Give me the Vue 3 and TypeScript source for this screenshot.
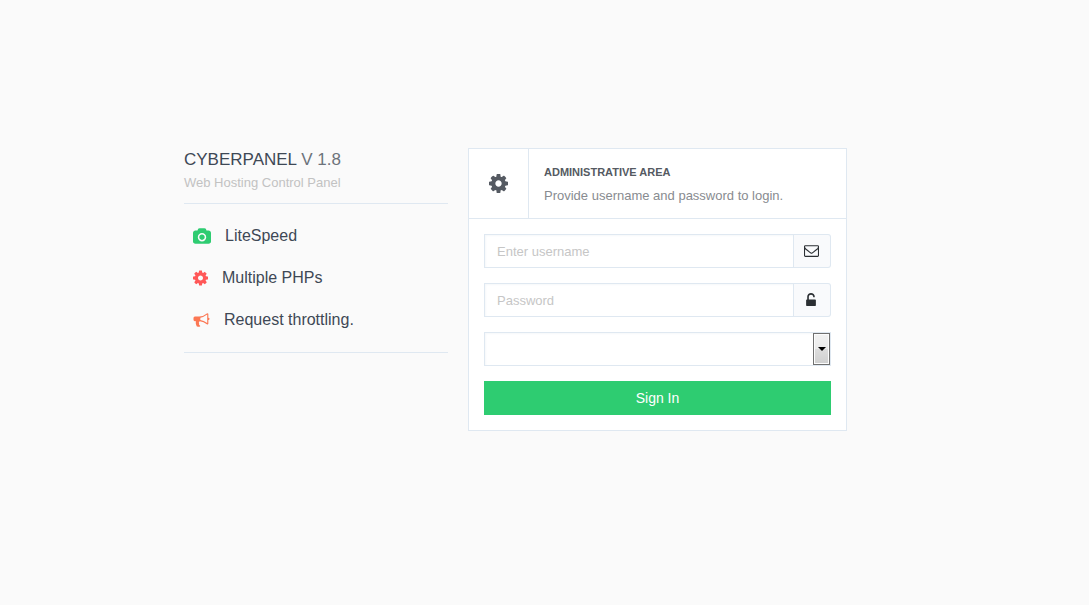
<script setup lang="ts">
import { ref } from 'vue'

interface Feature {
  label: string
  tone: string
  viewBox: string
  path: string
}

const cog =
  'M1152 896q0-106-75-181t-181-75-181 75-75 181 75 181 181 75 181-75 75-181zm512-109v222q0 12-8 23t-20 13l-185 28q-19 54-39 91 35 50 107 138 10 12 10 25t-9 23q-27 37-99 108t-94 71q-12 0-26-9l-138-108q-44 23-91 38-16 136-29 186-7 28-36 28h-222q-14 0-24.5-8.5t-11.5-21.5l-28-184q-49-16-90-37l-141 107q-10 9-25 9-14 0-25-11-126-114-165-168-7-10-7-23 0-12 8-23 15-21 51-66.5t54-70.5q-27-50-41-99l-183-27q-13-2-21-12.5t-8-23.5v-222q0-12 8-23t19-13l186-28q14-46 39-92-40-57-107-138-10-12-10-24 0-10 9-23 26-36 98.5-107.5t94.5-71.5q13 0 26 10l138 107q44-23 91-38 16-136 29-186 7-28 36-28h222q14 0 24.5 8.5t11.5 21.5l28 184q49 16 90 37l142-107q9-9 24-9 13 0 25 10 129 119 165 170 7 8 7 22 0 12-8 23-15 21-51 66.5t-54 70.5q26 50 41 98l183 28q13 2 21 12.5t8 23.5z'

const features: Feature[] = [
  {
    label: 'LiteSpeed',
    tone: 'camera',
    viewBox: '0 0 1920 1664',
    path: 'M960 672q119 0 203.5 84.5t84.5 203.5-84.5 203.5-203.5 84.5-203.5-84.5-84.5-203.5 84.5-203.5 203.5-84.5zm704-416q106 0 181 75t75 181v896q0 106-75 181t-181 75h-1408q-106 0-181-75t-75-181v-896q0-106 75-181t181-75h224l51-136q19-49 69.5-84.5t103.5-35.5h512q53 0 103.5 35.5t69.5 84.5l51 136h224zm-704 1152q185 0 316.5-131.5t131.5-316.5-131.5-316.5-316.5-131.5-316.5 131.5-131.5 316.5 131.5 316.5 316.5 131.5z'
  },
  { label: 'Multiple PHPs', tone: 'gear', viewBox: '128 128 1536 1536', path: cog },
  {
    label: 'Request throttling.',
    tone: 'horn',
    viewBox: '0 0 1792 1792',
    path: 'M1664 640q53 0 90.5 37.5t37.5 90.5-37.5 90.5-90.5 37.5v384q0 52-38 90t-90 38q-417-347-812-380-58 19-91 66t-31 100.5 40 92.5q-20 33-23 65.5t6 58 33.5 55 48 50 61.5 50.5q-29 58-111.5 83t-168.5 11.5-132-55.5q-7-23-29.5-87.5t-32-94.5-23-89-15-101 3.5-98.5 22-110.5h-122q-66 0-113-47t-47-113v-192q0-66 47-113t113-47h480q435 0 896-384 52 0 90 38t38 90v384zm-128 604v-954q-394 302-768 343v270q377 42 768 341z'
  }
]

const username = ref('')
const password = ref('')
const language = ref('')
</script>

<template>
  <main class="login">
    <section class="intro">
      <header class="brand">
        <h1>CYBERPANEL <span>V 1.8</span></h1>
        <p>Web Hosting Control Panel</p>
      </header>
      <ul class="features">
        <li v-for="f in features" :key="f.label">
          <svg :class="['mark', f.tone]" :viewBox="f.viewBox" aria-hidden="true"><path :d="f.path" /></svg>
          <span>{{ f.label }}</span>
        </li>
      </ul>
    </section>

    <form class="card" @submit.prevent>
      <header class="card-head">
        <div class="card-icon">
          <svg viewBox="128 128 1536 1536" aria-hidden="true"><path :d="cog" /></svg>
        </div>
        <div class="card-title">
          <h2>ADMINISTRATIVE AREA</h2>
          <p>Provide username and password to login.</p>
        </div>
      </header>
      <div class="fields">
        <div class="group">
          <input v-model="username" type="text" placeholder="Enter username" aria-label="Username" />
          <span class="addon">
            <svg class="envelope" viewBox="0 0 1792 1792" aria-hidden="true">
              <path d="M1664 1504v-768q-32 36-69 66-268 206-426 338-51 43-83 67t-86.5 48.5-102.5 24.5h-2q-48 0-102.5-24.5t-86.5-48.5-83-67q-158-132-426-338-37-30-69-66v768q0 13 9.5 22.5t22.5 9.5h1472q13 0 22.5-9.5t9.5-22.5zm0-1051v-24.5l-.5-13-3-12.5-5.5-9-9-7.5-14-2.5h-1472q-13 0-22.5 9.5t-9.5 22.5q0 168 147 284 193 152 401 317 6 5 35 29.5t46 37.5 44.5 31.5 50.5 27.5 43 9h2q20 0 43-9t50.5-27.5 44.5-31.5 46-37.5 35-29.5q208-165 401-317 54-43 100.5-115.5t46.5-131.5zm128-37v1088q0 66-47 113t-113 47h-1472q-66 0-113-47t-47-113v-1088q0-66 47-113t113-47h1472q66 0 113 47t47 113z" />
            </svg>
          </span>
        </div>
        <div class="group">
          <input v-model="password" type="password" placeholder="Password" aria-label="Password" />
          <span class="addon">
            <svg class="lock" viewBox="320 128 1152 1536" aria-hidden="true">
              <path d="M1376 896q40 0 68 28t28 68v576q0 40-28 68t-68 28h-960q-40 0-68-28t-28-68v-576q0-40 28-68t68-28h32v-320q0-185 131.5-316.5t316.5-131.5 316.5 131.5 131.5 316.5q0 26-19 45t-45 19h-64q-26 0-45-19t-19-45q0-106-75-181t-181-75-181 75-75 181v320h736z" />
            </svg>
          </span>
        </div>
        <div class="picker">
          <select v-model="language" aria-label="Language">
            <option value=""></option>
          </select>
          <span class="drop" aria-hidden="true"></span>
        </div>
        <button type="submit">Sign In</button>
      </div>
    </form>
  </main>
</template>

<style>
html {
  background: #fafafa;
}
</style>

<style scoped>
.login {
  display: grid;
  grid-template-columns: 264fr 379fr;
  gap: 20px;
  align-items: start;
  padding: 148px 242px 148px 184px;
  font-family: "Liberation Sans", Arial, sans-serif;
  color: #3e4855;
}
h1,
h2,
p,
ul {
  margin: 0;
  padding: 0;
  font-weight: 400;
}
svg {
  display: block;
  flex: none;
  fill: currentColor;
}
.brand {
  padding-bottom: 9px;
  border-bottom: 1px solid #dfe8f1;
}
.brand h1 {
  font-size: 17px;
  line-height: 24px;
}
.brand h1 span {
  color: #6d737b;
}
.brand p {
  font-size: 13px;
  line-height: 22px;
  color: #c2c2c2;
}
.features {
  display: flex;
  flex-direction: column;
  gap: 22px;
  padding: 22px 9px;
  list-style: none;
  border-bottom: 1px solid #dfe8f1;
}
.features li {
  display: flex;
  align-items: center;
  gap: 14px;
  font-size: 16px;
  line-height: 20px;
}
.mark {
  height: 16px;
}
.camera {
  width: 18px;
  color: #2ecc71;
}
.gear {
  width: 15px;
  color: #ff5757;
}
.horn {
  width: 17px;
  color: #fc7753;
}
.card {
  background: #fff;
  border: 1px solid #dfe8f1;
}
.card-head {
  display: flex;
  border-bottom: 1px solid #dfe8f1;
}
.card-icon {
  display: flex;
  align-items: center;
  justify-content: center;
  width: 59px;
  color: #555a62;
  border-right: 1px solid #dfe8f1;
}
.card-icon svg {
  width: 19px;
  height: 19px;
}
.card-title {
  padding: 11px 15px 10px;
}
.card-title h2 {
  font-size: 11px;
  font-weight: 700;
  line-height: 24px;
  color: #555a62;
}
.card-title p {
  font-size: 13px;
  line-height: 24px;
  color: #888b90;
}
.fields {
  display: flex;
  flex-direction: column;
  gap: 15px;
  padding: 15px;
}
.group {
  display: flex;
  height: 34px;
}
input,
select {
  box-sizing: border-box;
  min-width: 0;
  height: 34px;
  margin: 0;
  padding: 0 12px;
  font: 13px "Liberation Sans", Arial, sans-serif;
  color: #3e4855;
  background: #fff;
  border: 1px solid #dfe8f1;
  border-radius: 0;
  box-shadow: inset 1px 1px 2px #f6f8fa;
}
input {
  flex: 1;
}
input::placeholder {
  color: #c6c6c6;
  opacity: 1;
}
.addon {
  box-sizing: border-box;
  display: flex;
  align-items: center;
  justify-content: center;
  width: 37px;
  padding: 0 2px 1px 0;
  color: #2b2f33;
  background: #f9fafc;
  border: 1px solid #dfe8f1;
  border-left: 0;
  border-radius: 0 3px 3px 0;
}
.envelope {
  width: 15px;
  height: 15px;
}
.lock {
  width: 10px;
  height: 13px;
}
.picker {
  position: relative;
  height: 34px;
}
select {
  width: 100%;
  appearance: none;
}
.drop {
  position: absolute;
  top: 1px;
  right: 1px;
  bottom: 1px;
  box-sizing: border-box;
  display: grid;
  place-items: center;
  width: 17px;
  background: linear-gradient(#f2f2f2, #ebebeb 50%, #dddddd 50%, #cfcfcf);
  border: 1px solid #707070;
  box-shadow: inset 0 0 0 1px #fcfcfc;
  pointer-events: none;
}
.drop::after {
  content: "";
  border: solid transparent;
  border-width: 4px 4px 0;
  border-top-color: #000;
}
button {
  height: 34px;
  padding: 0 12px;
  font: 14px "Liberation Sans", Arial, sans-serif;
  color: #fff;
  background: #2ecc71;
  border: 0;
  cursor: pointer;
}
</style>
